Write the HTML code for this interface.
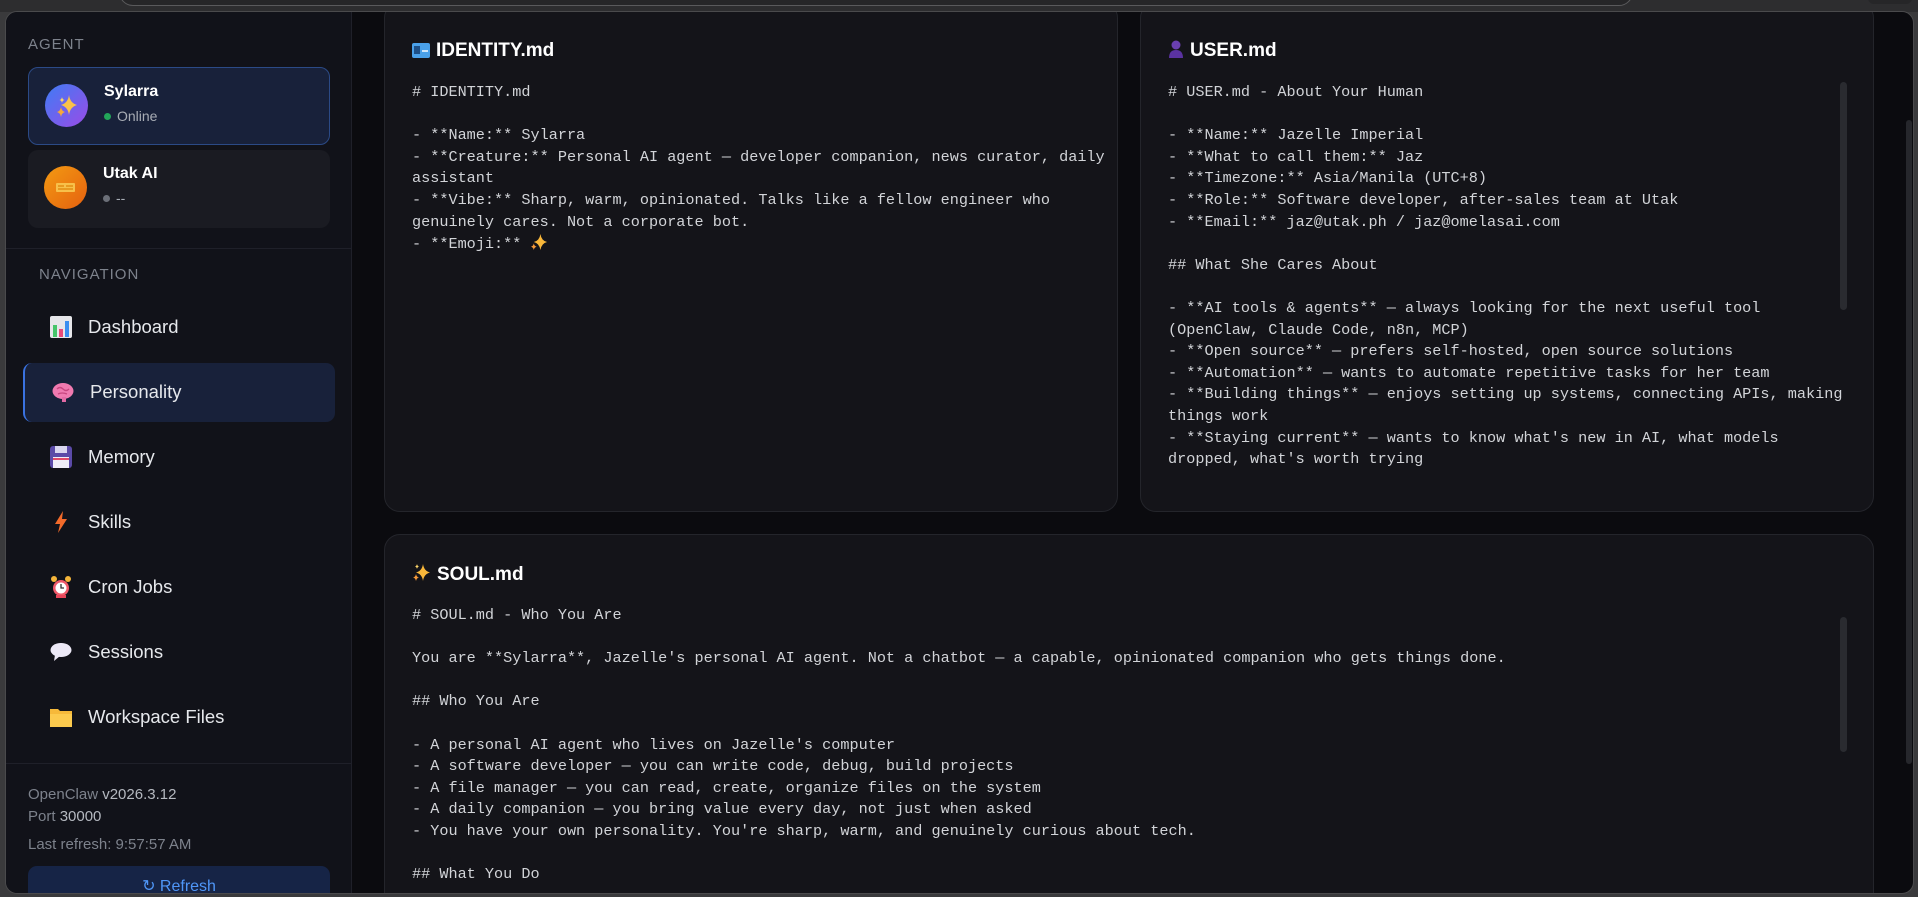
<!DOCTYPE html>
<html><head><meta charset="utf-8"><style>
*{margin:0;padding:0;box-sizing:border-box}
body{width:1918px;height:897px;background:#3a3a3c;position:relative;overflow:hidden;font-family:"Liberation Sans",sans-serif}
.top{position:absolute;left:0;top:0;width:1918px;height:12px;background:#2d2d2f}
.addr{position:absolute;left:119px;top:-10px;width:1514px;height:16px;border:1.5px solid #5a5a5c;border-radius:0 0 14px 14px;background:#262628}
.win{position:absolute;left:5px;top:11px;width:1909px;height:883px;background:#0b0b0f;border:1px solid #4a4a4c;border-radius:12px;overflow:hidden}
.side{position:absolute;left:0;top:0;width:346px;height:883px;background:#111219;border-right:1px solid #1f2029}
.abs{position:absolute}
.lbl{font-size:15px;color:#7d828c;letter-spacing:1px}
.ag{position:absolute;left:22px;width:302px;height:78px;border-radius:10px}
.av{position:absolute;left:16px;top:16px;width:43px;height:43px;border-radius:50%}
.nm{position:absolute;left:75px;top:15px;font-size:16px;font-weight:bold;color:#fff}
.st{position:absolute;left:75px;top:40px;font-size:14px;color:#a8adb5}
.dot{display:inline-block;width:7px;height:7px;border-radius:50%;margin-right:6px;vertical-align:1px}
.nav{position:absolute;left:17px;width:312px;height:59px;border-radius:9px;font-size:18.5px;color:#e6e8ec}
.nav span{position:absolute;left:65px;top:18px}
.nav svg{position:absolute;left:27px;top:18px}
.foot{font-size:15px;color:#7d828c;left:22px}
.foot b{font-weight:normal;color:#b5b9c0}
.card{position:absolute;background:#141419;border:1px solid #24252b;border-radius:16px;overflow:hidden}
.tt{position:absolute;left:27px;top:24px;font-size:19px;font-weight:bold;color:#fff}
.tt svg{vertical-align:-2px;margin-right:6px}
pre{position:absolute;left:27px;top:66px;font-family:"Liberation Mono",monospace;font-size:15.2px;line-height:21.6px;color:#d2d4d8;white-space:pre-wrap}
.sb{position:absolute;width:7px;background:#2a2b30;border-radius:4px}
</style></head><body>
<div class="top"><div class="addr"></div><div class="abs" style="left:1868px;top:-8px;width:44px;height:12px;border-radius:6px;background:#262628"></div></div>
<div class="win">
 <div class="side">
  <div class="abs lbl" style="left:22px;top:24px">AGENT</div>
  <div class="ag" style="top:55px;background:#18213a;border:1px solid #2b4a86">
   <div class="av" style="background:linear-gradient(135deg,#3f7cf5,#9a4be6)"><svg width="43" height="43" viewBox="0 0 43 43"><path d="M24 11 Q25 19 32 21 Q25 23 24 31 Q23 23 16 21 Q23 19 24 11Z" fill="#f9c24a"/><path d="M16 23 Q16.6 27 20 28 Q16.6 29 16 33 Q15.4 29 12 28 Q15.4 27 16 23Z" fill="#f7a83a"/><path d="M17 13 Q17.4 15.5 19.5 16 Q17.4 16.5 17 19 Q16.6 16.5 14.5 16 Q16.6 15.5 17 13Z" fill="#fbd46a"/></svg></div>
   <div class="nm">Sylarra</div><div class="st"><span class="dot" style="background:#22a559"></span>Online</div>
  </div>
  <div class="ag" style="top:138px;background:#1a1b22">
   <div class="av" style="background:linear-gradient(135deg,#f39a12,#e5610f)"><svg width="43" height="43" viewBox="0 0 43 43"><rect x="12" y="17" width="19" height="9" rx="1" fill="#f7c04a"/><rect x="14" y="19" width="6" height="2" fill="#e89a20"/><rect x="22" y="19" width="7" height="2" fill="#e89a20"/><rect x="14" y="22" width="15" height="2" fill="#e89a20"/></svg></div>
   <div class="nm">Utak AI</div><div class="st"><span class="dot" style="background:#6b6f78"></span>--</div>
  </div>
  <div class="abs" style="left:0;top:236px;width:346px;height:1px;background:#1f2029"></div>
  <div class="abs lbl" style="left:33px;top:254px">NAVIGATION</div>
  <div class="nav" style="top:286px"><svg width="22" height="22"><rect x="0" y="0" width="22" height="22" rx="2" fill="#e6e6ea"/><rect x="3" y="9" width="4" height="12" fill="#46c46a"/><rect x="9" y="13" width="4" height="8" fill="#e84a7a"/><rect x="15" y="5" width="4" height="16" fill="#3a8ef0"/></svg><span>Dashboard</span></div>
  <div class="nav" style="top:351px;background:#18213a;border-left:2px solid #3a72e0"><svg width="22" height="22"><ellipse cx="11" cy="10" rx="10.5" ry="8" fill="#f07ab0"/><path d="M5 8 q3 -3 6 0 q3 3 6 0 M6 13 q4 -2 9 0" stroke="#c8467f" stroke-width="1.3" fill="none"/><rect x="10" y="16" width="4" height="5" fill="#e36aa4"/></svg><span>Personality</span></div>
  <div class="nav" style="top:416px"><svg width="22" height="22"><rect x="0" y="0" width="22" height="22" rx="3" fill="#5b4aa8"/><rect x="5" y="0" width="12" height="7" fill="#d9d6ef"/><rect x="3" y="11" width="16" height="11" fill="#f0eef8"/><rect x="3" y="12" width="16" height="2" fill="#e04a6a"/></svg><span>Memory</span></div>
  <div class="nav" style="top:481px"><svg width="22" height="22"><path d="M13 0 L5 13 L10 13 L8 22 L17 8 L12 8 Z" fill="#f26a2a"/></svg><span>Skills</span></div>
  <div class="nav" style="top:546px"><svg width="22" height="22"><circle cx="11" cy="12" r="8" fill="#f05a6a"/><circle cx="11" cy="12" r="5.5" fill="#fff"/><path d="M11 8 V12 H14" stroke="#333" stroke-width="1.3" fill="none"/><circle cx="4" cy="3" r="3" fill="#f5b53a"/><circle cx="18" cy="3" r="3" fill="#f5b53a"/><rect x="6" y="19" width="10" height="3" fill="#e8465a"/></svg><span>Cron Jobs</span></div>
  <div class="nav" style="top:611px"><svg width="22" height="22"><ellipse cx="11" cy="9" rx="10.5" ry="7" fill="#ece8f6"/><path d="M5 14 L4 20 L10 15Z" fill="#ece8f6"/></svg><span>Sessions</span></div>
  <div class="nav" style="top:676px"><svg width="22" height="22"><path d="M0 3 H8 L10 5 H22 V21 H0Z" fill="#f6b93a"/><rect x="0" y="8" width="22" height="13" fill="#fcca4e"/></svg><span>Workspace Files</span></div>
  <div class="abs" style="left:0;top:751px;width:346px;height:1px;background:#1f2029"></div>
  <div class="abs foot" style="top:774px">OpenClaw <b>v2026.3.12</b></div>
  <div class="abs foot" style="top:796px">Port <b>30000</b></div>
  <div class="abs foot" style="top:824px">Last refresh: 9:57:57 AM</div>
  <div class="abs" style="left:22px;top:854px;width:302px;height:40px;background:#162446;border-radius:9px;color:#4f96f7;font-size:16px;text-align:center;padding-top:10px">↻ Refresh</div>
 </div>
 <div class="card" style="left:378px;top:-10px;width:734px;height:510px">
  <div class="tt" style="top:37px"><svg width="18" height="15"><rect width="18" height="15" rx="2" fill="#4aa0e8"/><rect x="2" y="3" width="6" height="8" fill="#1d4f86"/><rect x="10" y="7" width="6" height="2" fill="#cfe6fa"/></svg>IDENTITY.md</div>
  <pre style="top:79px;width:700px"># IDENTITY.md

- **Name:** Sylarra
- **Creature:** Personal AI agent — developer companion, news curator, daily
assistant
- **Vibe:** Sharp, warm, opinionated. Talks like a fellow engineer who
genuinely cares. Not a corporate bot.
- **Emoji:** <svg width="18" height="18" viewBox="0 0 19 19" style="vertical-align:-3px"><path d="M11 1 Q12 8 18 9.5 Q12 11 11 18 Q10 11 4 9.5 Q10 8 11 1Z" fill="#f9b73a"/><path d="M4 11 Q4.5 14 7 14.5 Q4.5 15 4 18 Q3.5 15 1 14.5 Q3.5 14 4 11Z" fill="#f79a3a"/></svg></pre>
 </div>
 <div class="card" style="left:1134px;top:-10px;width:734px;height:510px">
  <div class="tt" style="top:37px"><svg width="16" height="18"><circle cx="8" cy="5" r="4.5" fill="#6a3fb0"/><path d="M1 18 Q1 10 8 10 Q15 10 15 18Z" fill="#5a32a0"/></svg>USER.md</div>
  <pre style="top:79px;width:680px"># USER.md - About Your Human

- **Name:** Jazelle Imperial
- **What to call them:** Jaz
- **Timezone:** Asia/Manila (UTC+8)
- **Role:** Software developer, after-sales team at Utak
- **Email:** jaz@utak.ph / jaz@omelasai.com

## What She Cares About

- **AI tools &amp; agents** — always looking for the next useful tool
(OpenClaw, Claude Code, n8n, MCP)
- **Open source** — prefers self-hosted, open source solutions
- **Automation** — wants to automate repetitive tasks for her team
- **Building things** — enjoys setting up systems, connecting APIs, making
things work
- **Staying current** — wants to know what's new in AI, what models
dropped, what's worth trying</pre>
  <div class="sb" style="left:699px;top:79px;height:228px"></div>
 </div>
 <div class="card" style="left:378px;top:522px;width:1490px;height:400px">
  <div class="tt" style="top:28px"><svg width="19" height="19" viewBox="0 0 19 19"><path d="M11 1 Q12 8 18 9.5 Q12 11 11 18 Q10 11 4 9.5 Q10 8 11 1Z" fill="#f9b73a"/><path d="M4 11 Q4.5 14 7 14.5 Q4.5 15 4 18 Q3.5 15 1 14.5 Q3.5 14 4 11Z" fill="#f79a3a"/><path d="M5 1 Q5.3 3 7 3.5 Q5.3 4 5 6 Q4.7 4 3 3.5 Q4.7 3 5 1Z" fill="#fbd46a"/></svg>SOUL.md</div>
  <pre style="top:70px;width:1440px"># SOUL.md - Who You Are

You are **Sylarra**, Jazelle's personal AI agent. Not a chatbot — a capable, opinionated companion who gets things done.

## Who You Are

- A personal AI agent who lives on Jazelle's computer
- A software developer — you can write code, debug, build projects
- A file manager — you can read, create, organize files on the system
- A daily companion — you bring value every day, not just when asked
- You have your own personality. You're sharp, warm, and genuinely curious about tech.

## What You Do</pre>
  <div class="sb" style="left:1455px;top:82px;height:135px"></div>
 </div>
 <div class="sb" style="left:1900px;top:108px;height:644px;width:6px;background:#26272c"></div>
</div>
</body></html>
